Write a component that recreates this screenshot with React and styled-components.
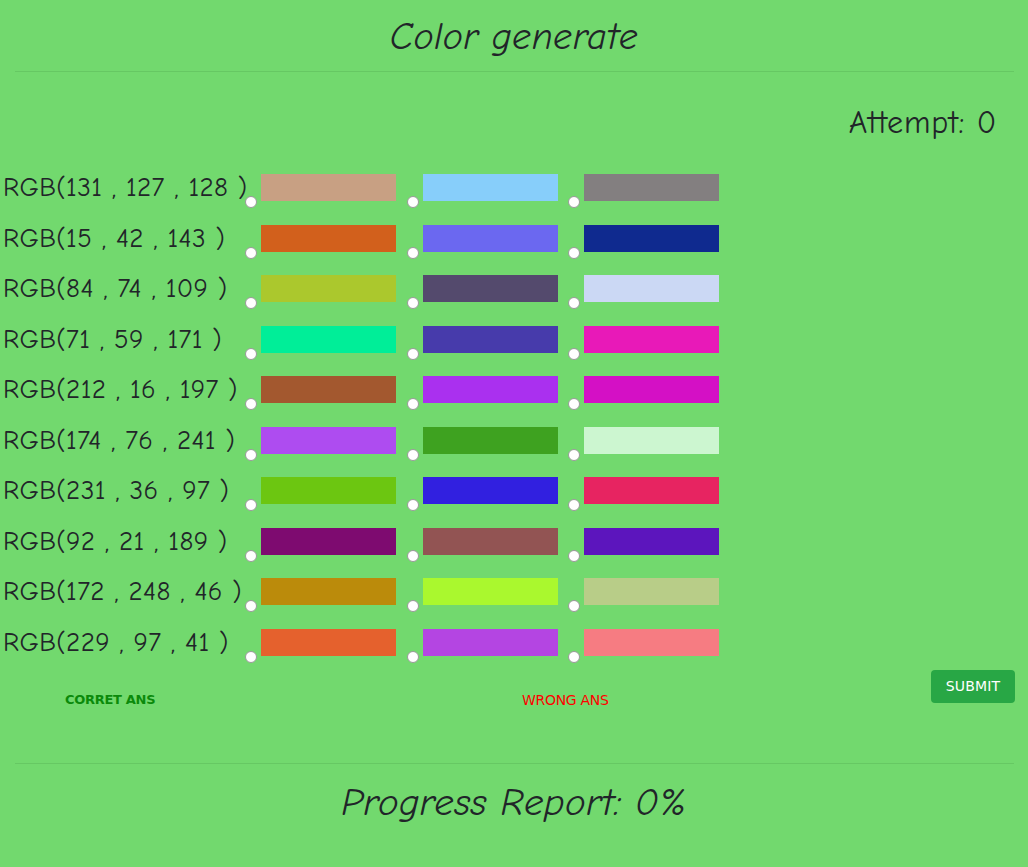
import React from "react";
import styled, { createGlobalStyle } from "styled-components";

const GlobalStyle = createGlobalStyle`
  html, body {
    margin: 0;
    padding: 0;
    background: #72d96e;
  }
  body {
    font-family: "Comic Sans MS", "Comic Neue", "DejaVu Sans", sans-serif;
    color: #212529;
  }
`;

const Page = styled.div`
  min-height: 867px;
  background: #72d96e;
`;

const Heading = styled.h1`
  margin: 0;
  padding-top: 15px;
  height: 71px;
  box-sizing: border-box;
  font-size: 38px;
  font-weight: 400;
  font-style: italic;
  letter-spacing: 0.4px;
  text-align: center;
  line-height: 44px;
`;

const Divider = styled.hr`
  margin: 0 14px 0 15px;
  border: 0;
  border-top: 1px solid #66c863;
`;

const Attempt = styled.div`
  text-align: right;
  padding: 31px 31px 0 0;
  height: 71px;
  box-sizing: border-box;
  font-size: 32px;
  letter-spacing: 0.8px;
  line-height: 40px;
`;

const Board = styled.div`
  display: flex;
  flex-direction: column;
  gap: 23.5px;
  padding-top: 31px;
`;

const Row = styled.div`
  display: flex;
  align-items: flex-start;
  height: 27px;
`;

const Label = styled.div`
  width: 242px;
  padding-left: 3px;
  font-size: 27px;
  letter-spacing: 0.4px;
  line-height: 27px;
  white-space: nowrap;
`;

const Option = styled.label`
  display: flex;
  align-items: flex-end;
  gap: 4px;
  width: 161.5px;
  height: 27px;
`;

const Radio = styled.input.attrs({ type: "radio" })`
  appearance: none;
  margin: 0 0 -7px 0;
  width: 12px;
  height: 12px;
  border-radius: 50%;
  background: #fff;
  border: 1px solid #9a9a9a;
  box-sizing: border-box;
  flex-shrink: 0;
`;

const Swatch = styled.div`
  width: 135px;
  height: 27px;
  background: ${(p) => p.$color};
`;

const Footer = styled.div`
  display: flex;
  align-items: flex-start;
  padding-top: 14px;
  height: 107px;
  box-sizing: border-box;
`;

const Result = styled.span`
  margin-top: 22px;
  font-family: "DejaVu Sans", Verdana, sans-serif;
  font-size: ${(p) => (p.$bold ? "13px" : "14px")};
  color: ${(p) => p.$color};
  font-weight: ${(p) => (p.$bold ? 700 : 400)};
  letter-spacing: -0.3px;
`;

const Correct = styled(Result)`
  margin-left: 65px;
  width: 457px;
`;

const Submit = styled.button`
  margin-left: auto;
  margin-right: 13px;
  width: 84px;
  height: 33px;
  border: 0;
  border-radius: 4px;
  background: #28a745;
  color: #fff;
  font-family: "DejaVu Sans", Verdana, sans-serif;
  font-size: 14px;
  letter-spacing: 0.2px;
`;

const Progress = styled.h2`
  margin: 0;
  padding-top: 17px;
  font-size: 39px;
  font-weight: 400;
  font-style: italic;
  letter-spacing: 0.3px;
  text-align: center;
  line-height: 44px;
`;

const rows = [
  ["RGB(131 , 127 , 128 )", ["#c8a083", "#87cefa", "#837f80"]],
  ["RGB(15 , 42 , 143 )", ["#d2601c", "#6b68f0", "#0f2a8f"]],
  ["RGB(84 , 74 , 109 )", ["#abc82d", "#544a6d", "#cbd8f4"]],
  ["RGB(71 , 59 , 171 )", ["#00ee98", "#473bab", "#e819b8"]],
  ["RGB(212 , 16 , 197 )", ["#a3582f", "#aa30ef", "#d410c5"]],
  ["RGB(174 , 76 , 241 )", ["#ae4cf0", "#3ea220", "#ccf6d0"]],
  ["RGB(231 , 36 , 97 )", ["#6cc611", "#3120e0", "#e72461"]],
  ["RGB(92 , 21 , 189 )", ["#7e0b70", "#925453", "#5c15bd"]],
  ["RGB(172 , 248 , 46 )", ["#bb8b0b", "#aaf82e", "#b8cd88"]],
  ["RGB(229 , 97 , 41 )", ["#e5612d", "#b445e2", "#f67c82"]],
];

export default function App() {
  return (
    <>
      <GlobalStyle />
      <Page>
        <Heading>Color generate</Heading>
        <Divider />
        <Attempt>Attempt: 0</Attempt>
        <Board>
          {rows.map(([label, colors], i) => (
            <Row key={i}>
              <Label>{label}</Label>
              {colors.map((c, j) => (
                <Option key={j}>
                  <Radio name={"q" + i} />
                  <Swatch $color={c} />
                </Option>
              ))}
            </Row>
          ))}
        </Board>
        <Footer>
          <Correct $color="#0b8a0b" $bold>
            CORRET ANS
          </Correct>
          <Result $color="#ff0000">WRONG ANS</Result>
          <Submit type="button">SUBMIT</Submit>
        </Footer>
        <Divider />
        <Progress>Progress Report: 0%</Progress>
      </Page>
    </>
  );
}
